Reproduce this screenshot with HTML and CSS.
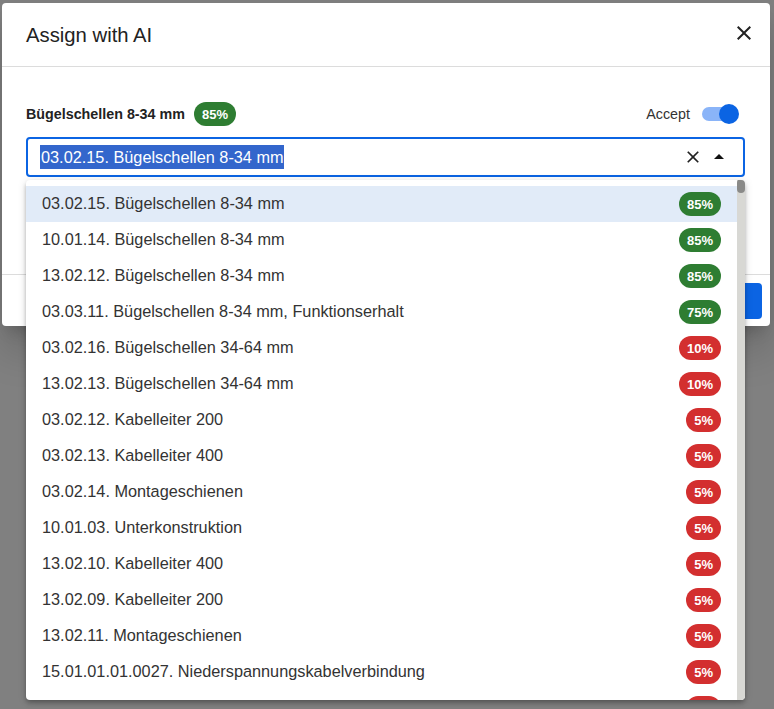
FILE: index.html
```html
<!DOCTYPE html>
<html lang="de">
<head>
<meta charset="utf-8">
<title>Assign with AI</title>
<link rel="stylesheet" href="styles.css">
</head>
<body>
<div class="backdrop">
  <div class="dialog">
    <div class="dialog-header">
      <h2 class="dialog-title">Assign with AI</h2>
      <button class="icon-btn close-btn" aria-label="Close">
        <svg width="24" height="24" viewBox="0 0 24 24"><path d="M19 6.41 17.59 5 12 10.590 6.41 5 5 6.41 10.59 12 5 17.59 6.41 19 12 13.41 17.59 19 19 17.59 13.41 12z" fill="#222"/></svg>
      </button>
    </div>
    <div class="dialog-content">
      <div class="label-row">
        <div class="label-left">
          <span class="item-label">Bügelschellen 8-34 mm</span>
          <span class="badge badge-green">85%</span>
        </div>
        <div class="accept">
          <span class="accept-text">Accept</span>
          <span class="switch"><span class="switch-track"></span><span class="switch-thumb"></span></span>
        </div>
      </div>
      <div class="combo">
        <span class="combo-value"><span class="selected-text">03.02.15. Bügelschellen 8-34 mm</span></span>
        <span class="combo-icons">
          <svg class="clear-icon" width="20" height="20" viewBox="0 0 24 24"><path d="M19 6.41 17.59 5 12 10.59 6.41 5 5 6.41 10.59 12 5 17.59 6.41 19 12 13.41 17.59 19 19 17.59 13.41 12z" fill="#222"/></svg>
          <svg class="arrow-icon" width="24" height="24" viewBox="0 0 24 24"><path d="M7 14l5-5 5 5z" fill="#111"/></svg>
        </span>
      </div>
    </div>
    <div class="dialog-footer">
      <button class="primary-btn">Save</button>
    </div>
  </div>

  <div class="dropdown">
    <ul class="options">
      <li class="option active"><span>03.02.15. Bügelschellen 8-34 mm</span><span class="badge badge-green">85%</span></li>
      <li class="option"><span>10.01.14. Bügelschellen 8-34 mm</span><span class="badge badge-green">85%</span></li>
      <li class="option"><span>13.02.12. Bügelschellen 8-34 mm</span><span class="badge badge-green">85%</span></li>
      <li class="option"><span>03.03.11. Bügelschellen 8-34 mm, Funktionserhalt</span><span class="badge badge-green">75%</span></li>
      <li class="option"><span>03.02.16. Bügelschellen 34-64 mm</span><span class="badge badge-red">10%</span></li>
      <li class="option"><span>13.02.13. Bügelschellen 34-64 mm</span><span class="badge badge-red">10%</span></li>
      <li class="option"><span>03.02.12. Kabelleiter 200</span><span class="badge badge-red">5%</span></li>
      <li class="option"><span>03.02.13. Kabelleiter 400</span><span class="badge badge-red">5%</span></li>
      <li class="option"><span>03.02.14. Montageschienen</span><span class="badge badge-red">5%</span></li>
      <li class="option"><span>10.01.03. Unterkonstruktion</span><span class="badge badge-red">5%</span></li>
      <li class="option"><span>13.02.10. Kabelleiter 400</span><span class="badge badge-red">5%</span></li>
      <li class="option"><span>13.02.09. Kabelleiter 200</span><span class="badge badge-red">5%</span></li>
      <li class="option"><span>13.02.11. Montageschienen</span><span class="badge badge-red">5%</span></li>
      <li class="option"><span>15.01.01.01.0027. Niederspannungskabelverbindung</span><span class="badge badge-red">5%</span></li>
      <li class="option"><span></span><span class="badge badge-red">5%</span></li>
    </ul>
    <div class="scrollbar"><div class="scroll-thumb"></div></div>
  </div>
</div>
</body>
</html>
```

FILE: styles.css
```css
* { box-sizing: border-box; }
html, body {
  margin: 0;
  padding: 0;
  height: 100%;
}
body {
  font-family: "Liberation Sans", Arial, sans-serif;
  color: #333;
  background: #ffffff;
}
.backdrop {
  position: relative;
  width: 774px;
  height: 709px;
  background: #808080;
  padding: 3px 4px 0 2px;
  overflow: hidden;
}
.dialog {
  width: 768px;
  background: #fff;
  border-radius: 4px;
  display: flex;
  flex-direction: column;
  box-shadow: 0 11px 15px -7px rgba(0,0,0,.2), 0 24px 38px 3px rgba(0,0,0,.14);
}
.dialog-header {
  height: 64px;
  display: flex;
  align-items: center;
  justify-content: space-between;
  padding: 0 14px 0 24px;
  border-bottom: 1px solid #dcdcdc;
}
.dialog-title {
  margin: 0;
  font-size: 20.3px;
  font-weight: 400;
  color: #222;
  padding-top: 2px;
}
.icon-btn {
  border: 0;
  background: none;
  padding: 0;
  width: 24px;
  height: 24px;
  display: flex;
  cursor: pointer;
}
.close-btn { margin-top: -4px; }
.dialog-content {
  padding: 35px 25px 97px 24px;
}
.label-row {
  height: 24px;
  display: flex;
  align-items: center;
  justify-content: space-between;
  margin-bottom: 11px;
}
.label-left {
  display: flex;
  align-items: center;
  gap: 9px;
}
.item-label {
  font-size: 14.3px;
  font-weight: 700;
  color: #222;
}
.badge {
  display: inline-flex;
  align-items: center;
  justify-content: center;
  height: 24px;
  padding: 0 8px;
  border-radius: 12px;
  color: #fff;
  font-size: 13px;
  font-weight: 700;
  font-family: "Liberation Sans", Arial, sans-serif;
}
.badge-green { background: #2e7d32; }
.badge-red { background: #d32f2f; }
.accept {
  display: flex;
  align-items: center;
  gap: 12px;
  padding-right: 6px;
}
.accept-text {
  font-size: 14.3px;
  color: #333;
}
.switch {
  position: relative;
  width: 37px;
  height: 22px;
  display: block;
}
.switch-track {
  position: absolute;
  left: 0;
  top: 4px;
  width: 34px;
  height: 14px;
  border-radius: 7px;
  background: #8ab4f8;
}
.switch-thumb {
  position: absolute;
  right: 0;
  top: 1px;
  width: 20px;
  height: 20px;
  border-radius: 50%;
  background: #0b64e3;
}
.combo {
  height: 40px;
  border: 2px solid #0b64e3;
  border-radius: 4px;
  display: flex;
  align-items: center;
  justify-content: space-between;
  padding: 0 12px 0 12px;
}
.combo-value {
  font-size: 16.3px;
  color: #222;
}
.selected-text {
  background: #3366cc;
  color: #fff;
  padding: 3px 0 3px 1px;
}
.combo-icons {
  display: flex;
  align-items: center;
  gap: 4px;
}
.dialog-footer {
  border-top: 1px solid #dcdcdc;
  padding: 8px 8px 7px;
  display: flex;
  justify-content: flex-end;
}
.primary-btn {
  height: 36px;
  border: 0;
  border-radius: 4px;
  background: #0b64e3;
  color: #fff;
  font-size: 14px;
  padding: 0 20px;
  font-family: "Liberation Sans", Arial, sans-serif;
}
.dropdown {
  position: absolute;
  left: 26px;
  top: 180px;
  width: 719px;
  height: 520px;
  background: #fff;
  border-radius: 4px;
  box-shadow: 0 2px 4px -1px rgba(0,0,0,.2), 0 4px 5px 0 rgba(0,0,0,.14), 0 1px 10px 0 rgba(0,0,0,.12);
  display: flex;
  overflow: hidden;
}
.options {
  list-style: none;
  margin: 0;
  padding: 6px 0 0;
  flex: 1;
  overflow: hidden;
}
.option {
  height: 36px;
  display: flex;
  align-items: center;
  justify-content: space-between;
  padding: 0 16px 1px;
  font-size: 16.3px;
  color: #333;
}
.option .badge { margin-top: 1px; }
.option.active { background: #e1ebf8; }
.scrollbar {
  width: 8px;
  background: #d8d8d4;
  border-radius: 0 0 4px 0;
}
.scroll-thumb {
  width: 8px;
  height: 14px;
  margin-top: -1px;
  border-radius: 4px;
  background: #8a8a88;
}
```
